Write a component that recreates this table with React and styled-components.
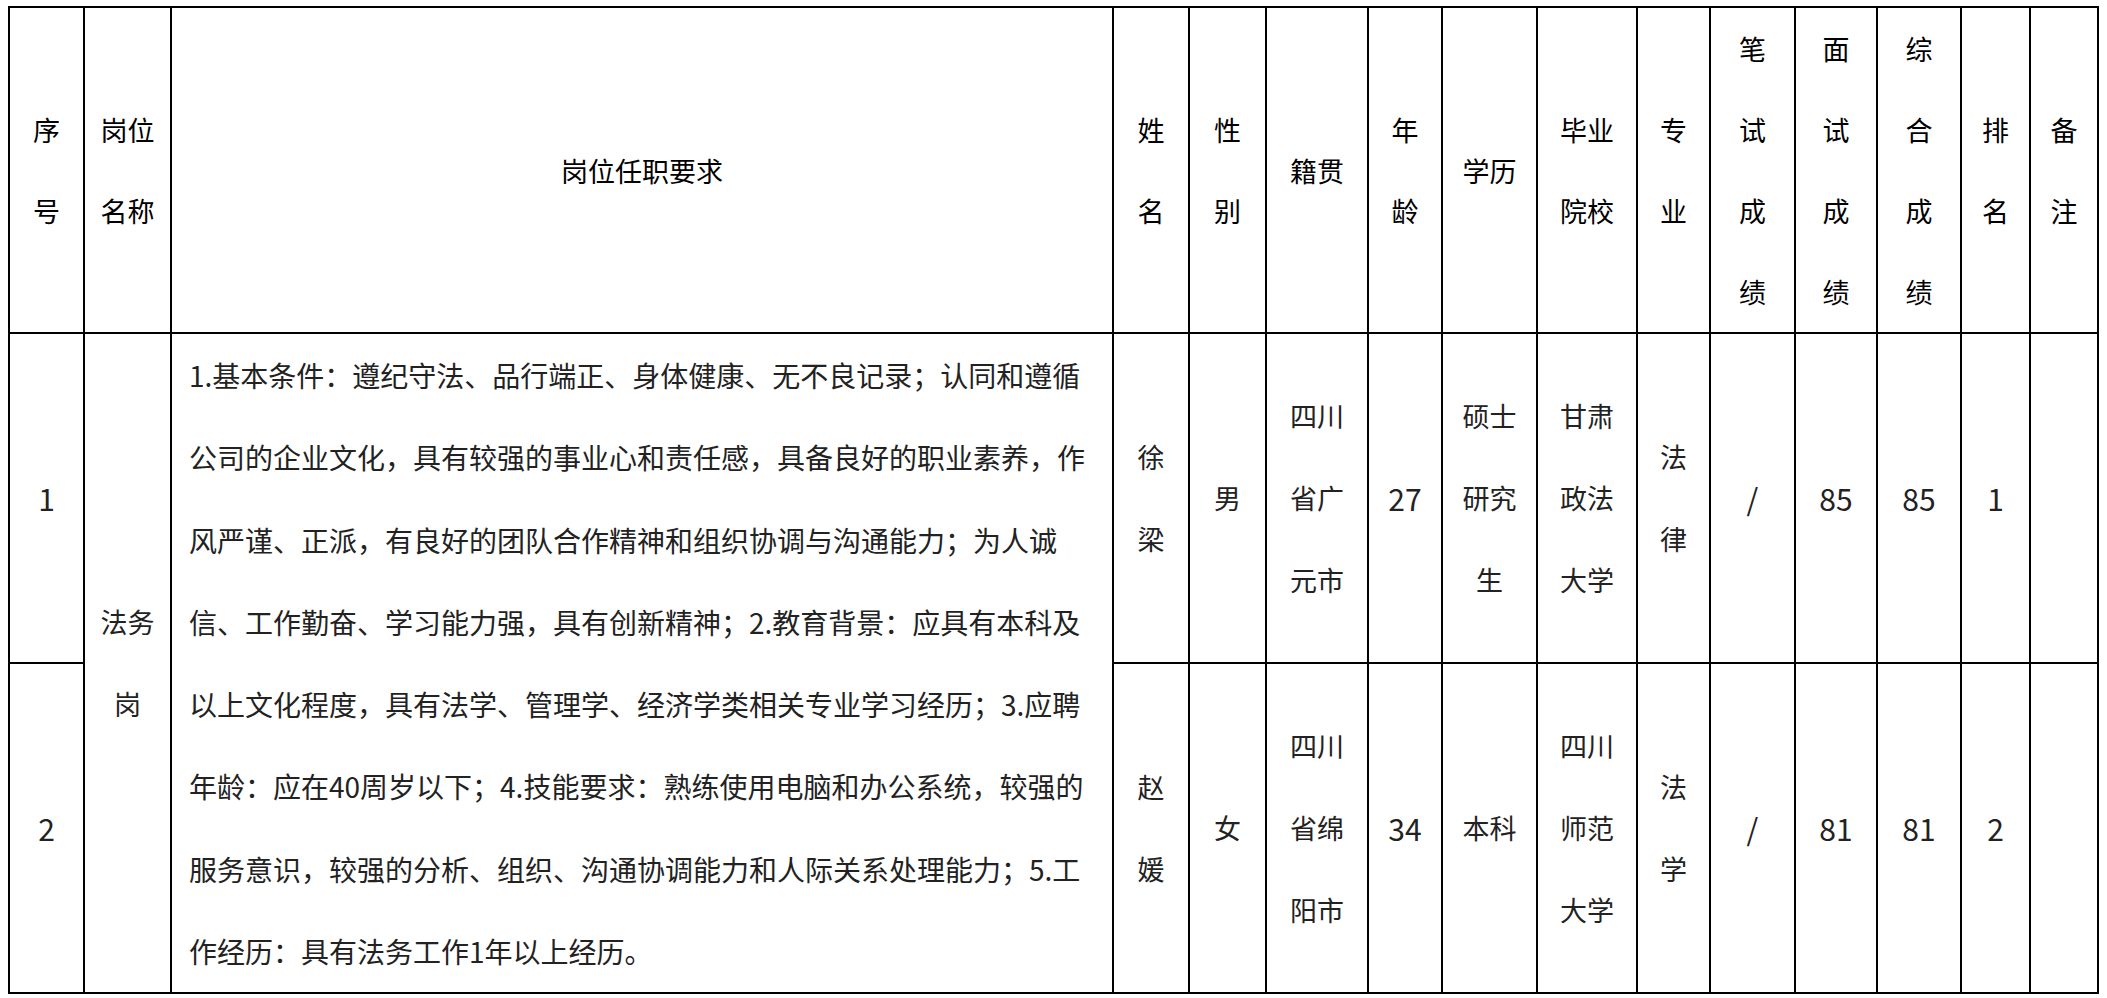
import styled, { createGlobalStyle } from 'styled-components';

const GlobalStyle = createGlobalStyle`
  html, body {
    margin: 0;
    padding: 0;
    background: #ffffff;
  }
  body {
    font-family: "Noto Sans CJK SC", "Noto Sans", sans-serif;
  }
`;

const Page = styled.div`
  padding: 6px 8px;
`;

const Table = styled.table`
  border-collapse: collapse;
  table-layout: fixed;
  width: 2091px;
`;

const HeadCell = styled.th`
  border: 2px solid #000;
  height: 320px;
  padding: 0;
  font-weight: 400;
  font-size: 27px;
  line-height: 81px;
  color: #000;
  text-align: center;
  vertical-align: middle;
`;

const Cell = styled.td`
  border: 2px solid #000;
  height: 325px;
  padding: 0;
  font-size: ${(p) => (p.$num ? '30px' : '27px')};
  line-height: 82px;
  color: #222;
  text-align: center;
  vertical-align: middle;
`;

const ReqCell = styled(Cell)`
  text-align: left;
  padding: 0 10px 0 17px;
  font-size: 28px;
  line-height: 82.25px;
  white-space: nowrap;
`;

// 列宽（像素），依截图量取
const widths = [75, 87, 942, 76, 77, 102, 74, 95, 100, 73, 85, 82, 84, 69, 68];

const headers = [
  '序/号', '岗位/名称', '岗位任职要求', '姓/名', '性/别', '籍贯', '年/龄', '学历',
  '毕业/院校', '专/业', '笔/试/成/绩', '面/试/成/绩', '综/合/成/绩', '排/名', '备/注',
];

const requirement = [
  '1.基本条件：遵纪守法、品行端正、身体健康、无不良记录；认同和遵循',
  '公司的企业文化，具有较强的事业心和责任感，具备良好的职业素养，作',
  '风严谨、正派，有良好的团队合作精神和组织协调与沟通能力；为人诚',
  '信、工作勤奋、学习能力强，具有创新精神；2.教育背景：应具有本科及',
  '以上文化程度，具有法学、管理学、经济学类相关专业学习经历；3.应聘',
  '年龄：应在40周岁以下；4.技能要求：熟练使用电脑和办公系统，较强的',
  '服务意识，较强的分析、组织、沟通协调能力和人际关系处理能力；5.工',
  '作经历：具有法务工作1年以上经历。',
];

const people = [
  {
    no: '1', name: '徐/梁', sex: '男', origin: '四川/省广/元市', age: '27',
    edu: '硕士/研究/生', school: '甘肃/政法/大学', major: '法/律',
    written: '/', interview: '85', total: '85', rank: '1', note: '',
  },
  {
    no: '2', name: '赵/媛', sex: '女', origin: '四川/省绵/阳市', age: '34',
    edu: '本科', school: '四川/师范/大学', major: '法/学',
    written: '/', interview: '81', total: '81', rank: '2', note: '',
  },
];

function Lines({ text }) {
  const parts = text === '/' ? ['/'] : text.split('/');
  return parts.map((p, i) => (
    <span key={i}>
      {i > 0 && <br />}
      {p}
    </span>
  ));
}

function App() {
  return (
    <Page>
      <GlobalStyle />
      <Table>
        <colgroup>
          {widths.map((w, i) => (
            <col key={i} style={{ width: w }} />
          ))}
        </colgroup>
        <thead>
          <tr>
            {headers.map((h) => (
              <HeadCell key={h}>
                <Lines text={h} />
              </HeadCell>
            ))}
          </tr>
        </thead>
        <tbody>
          {people.map((p, idx) => (
            <tr key={p.no}>
              <Cell $num>{p.no}</Cell>
              {idx === 0 && (
                <>
                  <Cell rowSpan={2}>
                    <Lines text="法务/岗" />
                  </Cell>
                  <ReqCell rowSpan={2}>
                    {requirement.map((line, i) => (
                      <span key={i}>
                        {i > 0 && <br />}
                        {line}
                      </span>
                    ))}
                  </ReqCell>
                </>
              )}
              <Cell><Lines text={p.name} /></Cell>
              <Cell>{p.sex}</Cell>
              <Cell><Lines text={p.origin} /></Cell>
              <Cell $num>{p.age}</Cell>
              <Cell><Lines text={p.edu} /></Cell>
              <Cell><Lines text={p.school} /></Cell>
              <Cell><Lines text={p.major} /></Cell>
              <Cell $num>{p.written}</Cell>
              <Cell $num>{p.interview}</Cell>
              <Cell $num>{p.total}</Cell>
              <Cell $num>{p.rank}</Cell>
              <Cell>{p.note}</Cell>
            </tr>
          ))}
        </tbody>
      </Table>
    </Page>
  );
}

export default App;
